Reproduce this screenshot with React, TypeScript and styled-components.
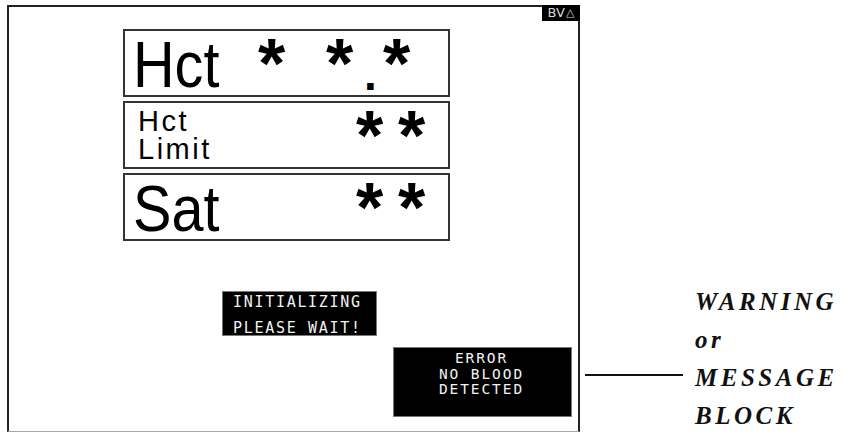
import { FunctionComponent } from "react";
import styled, { createGlobalStyle } from "styled-components";

const GlobalStyle = createGlobalStyle`
  html, body {
    margin: 0;
    padding: 0;
    background: #ffffff;
    overflow: hidden;
  }
`;

const Page = styled.div`
  display: flex;
  align-items: flex-start;
  height: 433px;
  padding-left: 7px;
  box-sizing: border-box;
`;

const Screen = styled.div`
  position: relative;
  margin-top: 5px;
  width: 573px;
  height: 427px;
  box-sizing: border-box;
  border: 2px solid #222222;
  border-bottom: 1px solid #a8a8a8;
  display: flex;
  flex-direction: column;
  align-items: flex-start;
`;

const Badge = styled.div`
  position: absolute;
  top: -2px;
  right: -2px;
  width: 38px;
  height: 16px;
  background: #000000;
  color: #d8d8d8;
  font-family: "DejaVu Sans", sans-serif;
  font-size: 13px;
  line-height: 16px;
  display: flex;
  align-items: center;
  justify-content: center;
  gap: 1px;
  span {
    font-size: 11px;
  }
`;

const Readouts = styled.div`
  margin: 22px 0 0 114px;
  display: flex;
  flex-direction: column;
  gap: 4px;
`;

const Readout = styled.div`
  width: 327px;
  height: 68px;
  box-sizing: border-box;
  border: 2px solid #333333;
  display: flex;
  align-items: center;
  font-family: "Liberation Sans", Arial, sans-serif;
  color: #000000;
`;

const BigLabel = styled.span`
  display: inline-block;
  margin-left: 8px;
  padding-top: 3px;
  font-size: 64px;
  line-height: 68px;
  transform: scaleX(0.9);
  transform-origin: left center;
`;

const SmallLabel = styled.div`
  margin-left: 13px;
  font-size: 29px;
  line-height: 28px;
  letter-spacing: 2.5px;
`;

const Value = styled.div<{ $right: number }>`
  margin-left: auto;
  align-self: stretch;
  display: flex;
  align-items: flex-start;
  gap: 15px;
  padding-top: 12px;
  padding-right: ${(p) => p.$right}px;
  font-family: "Liberation Sans", Arial, sans-serif;
  font-weight: 700;
`;

const Star = styled.span`
  display: block;
  width: 27px;
  height: 27px;
  font-size: 70px;
  line-height: 27px;
  text-align: center;
  overflow: visible;
  position: relative;
  top: 8px;
`;

const Dot = styled.span`
  display: block;
  width: 6px;
  height: 46px;
  margin: 8px -5px 0 -1px;
  font-size: 46px;
  line-height: 46px;
  text-indent: -3px;
  overflow: visible;
`;

const Space = styled.span`
  display: block;
  width: 11px;
`;

const MessageBox = styled.div<{ $left: number; $top: number; $width: number; $height: number }>`
  margin-left: ${(p) => p.$left}px;
  margin-top: ${(p) => p.$top}px;
  width: ${(p) => p.$width}px;
  height: ${(p) => p.$height}px;
  box-sizing: border-box;
  background: #000000;
  border: 1px solid #777777;
  color: #f2f2f2;
  font-family: "DejaVu Sans Mono", "Liberation Mono", monospace;
`;

const InitBox = styled(MessageBox)`
  padding: 2px 0 0 10px;
  display: flex;
  flex-direction: column;
  gap: 10px;
  font-size: 15px;
  line-height: 16px;
  letter-spacing: 1.7px;
`;

const ErrorBox = styled(MessageBox)`
  padding-top: 3px;
  padding-right: 2px;
  text-align: center;
  font-size: 14.5px;
  line-height: 15.5px;
  letter-spacing: 1.9px;
`;

const Aside = styled.div`
  margin: 283px 0 0 5px;
  display: grid;
  grid-template-columns: 98px auto;
  column-gap: 12px;
`;

const Note = styled.div`
  grid-column: 2;
  font-family: "Liberation Serif", "Times New Roman", serif;
  font-style: italic;
  font-weight: 700;
  font-size: 25px;
  line-height: 38px;
  letter-spacing: 3.5px;
  color: #111111;
`;

const Leader = styled.div`
  grid-column: 1;
  grid-row: 3;
  align-self: start;
  margin-top: 15px;
  height: 2px;
  background: #111111;
`;

const Glyphs: FunctionComponent<{ text: string }> = ({ text }) => (
  <>
    {text.split("").map((ch, i) =>
      ch === "*" ? (
        <Star key={i}>*</Star>
      ) : ch === "." ? (
        <Dot key={i}>.</Dot>
      ) : (
        <Space key={i} />
      )
    )}
  </>
);

const App: FunctionComponent = () => {
  return (
    <>
      <GlobalStyle />
      <Page>
        <Screen>
          <Badge>
            BV<span>△</span>
          </Badge>
          <Readouts>
            <Readout>
              <BigLabel>Hct</BigLabel>
              <Value $right={38}>
                <Glyphs text="* *.*" />
              </Value>
            </Readout>
            <Readout>
              <SmallLabel>
                Hct
                <br />
                Limit
              </SmallLabel>
              <Value $right={23}>
                <Glyphs text="**" />
              </Value>
            </Readout>
            <Readout>
              <BigLabel>Sat</BigLabel>
              <Value $right={23}>
                <Glyphs text="**" />
              </Value>
            </Readout>
          </Readouts>
          <InitBox $left={213} $top={50} $width={155} $height={45}>
            <div>INITIALIZING</div>
            <div>PLEASE WAIT!</div>
          </InitBox>
          <ErrorBox $left={384} $top={11} $width={179} $height={70}>
            <div>ERROR</div>
            <div>NO BLOOD</div>
            <div>DETECTED</div>
          </ErrorBox>
        </Screen>
        <Aside>
          <Note>WARNING</Note>
          <Note>or</Note>
          <Note>MESSAGE</Note>
          <Note>BLOCK</Note>
          <Leader />
        </Aside>
      </Page>
    </>
  );
};

export default App;
